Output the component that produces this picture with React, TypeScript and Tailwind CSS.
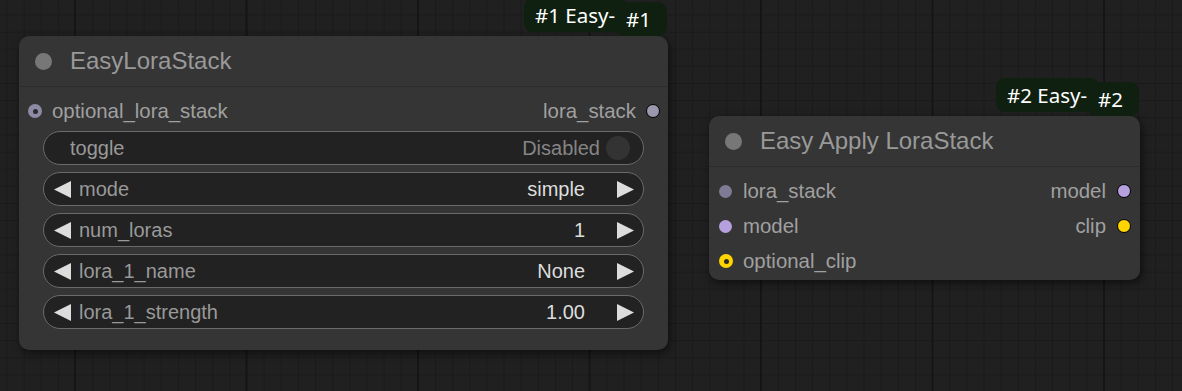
import React from "react";

type SlotKind = "ring" | "fill" | "out";

function Slot({ kind, color }: { kind: SlotKind; color: string }) {
  if (kind === "ring") {
    return (
      <span className={`flex h-[14px] w-[14px] shrink-0 items-center justify-center rounded-full ${color}`}>
        <span className="h-[5px] w-[5px] rounded-full bg-[#2a2a2a]" />
      </span>
    );
  }
  if (kind === "out") {
    return <span className={`h-[14px] w-[14px] shrink-0 rounded-full border-[1.5px] border-black ${color}`} />;
  }
  return <span className={`h-[13px] w-[13px] shrink-0 rounded-full ${color}`} />;
}

function Tri({ dir }: { dir: "l" | "r" }) {
  return (
    <svg width="17" height="17" viewBox="0 0 17 17" className="shrink-0">
      <polygon points={dir === "l" ? "17,0 17,17 0,8.5" : "0,0 0,17 17,8.5"} fill="#dddddd" />
    </svg>
  );
}

function Badge({ id }: { id: string }) {
  return (
    <div className="absolute right-[1px] top-[-38px] flex items-start font-['Noto_Sans','Open_Sans',sans-serif] text-[20.5px] text-white">
      <div className="flex h-[34px] items-center rounded-[9px] bg-[#0f1f10] pl-[11px] pr-[12px]">#{id} Easy-</div>
      <div className="-ml-[12px] mt-[4px] flex h-[34px] items-center rounded-[9px] bg-[#0f1f10] pl-[11px] pr-[16px]">#{id}</div>
    </div>
  );
}

function TitleBar({ title }: { title: string }) {
  return (
    <div className="flex h-[51px] items-center border-b border-[#2b2b2b] pl-[16px]">
      <span className="h-[17px] w-[17px] rounded-full bg-[#777777]" />
      <span className="ml-[18px] text-[24px] text-[#999999]">{title}</span>
    </div>
  );
}

function ComboWidget({ label, value }: { label: string; value: string }) {
  return (
    <div className="flex h-[34px] items-center rounded-full border border-[#6a6a6a] bg-[#222222] pl-[10px] pr-[9px] text-[20px]">
      <Tri dir="l" />
      <span className="ml-[8px] text-[#999999]">{label}</span>
      <span className="ml-auto text-[#dddddd]">{value}</span>
      <span className="ml-[32px] flex">
        <Tri dir="r" />
      </span>
    </div>
  );
}

export default function App() {
  return (
    <div className="relative h-[391px] w-[1182px] overflow-hidden bg-[#202020] bg-[linear-gradient(to_right,#151515_2px,transparent_2px),linear-gradient(to_right,#1a1a1a_1px,transparent_1px),linear-gradient(to_bottom,#1a1a1a_1px,transparent_1px)] bg-size-[171.5px_171.5px,17.15px_17.15px,17.15px_17.15px] bg-position-[74px_0px,6.5px_14.5px,6.5px_14.5px] font-['Liberation_Sans',Arial,sans-serif]">
      {/* node #1 */}
      <div className="absolute left-[19px] top-[36px] w-[649px] rounded-[10px] bg-[#353535] shadow-[2px_3px_8px_rgba(0,0,0,0.55)]">
        <Badge id="1" />
        <TitleBar title="EasyLoraStack" />
        <div className="pb-[21px] pt-[7px]">
          <div className="flex h-[35px] items-center text-[20.4px]">
            <div className="flex items-center gap-[10px] pl-[9px]">
              <Slot kind="ring" color="bg-[#8d8aa5]" />
              <span className="text-[#a0a0a0]">optional_lora_stack</span>
            </div>
            <div className="ml-auto flex items-center gap-[10px] pr-[8px]">
              <span className="text-[#a0a0a0]">lora_stack</span>
              <Slot kind="out" color="bg-[#9a98ac]" />
            </div>
          </div>
          <div className="mt-[2px] flex flex-col gap-[7px] px-[24px]">
            <div className="flex h-[34px] items-center rounded-full border border-[#6a6a6a] bg-[#222222] pl-[26px] pr-[13px] text-[20px]">
              <span className="text-[#999999]">toggle</span>
              <span className="ml-auto text-[#858585]">Disabled</span>
              <span className="ml-[6px] h-[24px] w-[24px] rounded-full bg-[#333333]" />
            </div>
            <ComboWidget label="mode" value="simple" />
            <ComboWidget label="num_loras" value="1" />
            <ComboWidget label="lora_1_name" value="None" />
            <ComboWidget label="lora_1_strength" value="1.00" />
          </div>
        </div>
      </div>

      {/* node #2 */}
      <div className="absolute left-[709px] top-[116px] w-[431px] rounded-[10px] bg-[#353535] shadow-[2px_3px_8px_rgba(0,0,0,0.55)]">
        <Badge id="2" />
        <TitleBar title="Easy Apply LoraStack" />
        <div className="pb-[1px] pt-[7px] text-[20.4px]">
          <div className="flex h-[35px] items-center">
            <div className="flex items-center gap-[11px] pl-[10px]">
              <Slot kind="fill" color="bg-[#7f7b95]" />
              <span className="text-[#a0a0a0]">lora_stack</span>
            </div>
            <div className="ml-auto flex items-center gap-[11px] pr-[9px]">
              <span className="text-[#a0a0a0]">model</span>
              <Slot kind="out" color="bg-[#b7a0de]" />
            </div>
          </div>
          <div className="flex h-[35px] items-center">
            <div className="flex items-center gap-[11px] pl-[10px]">
              <Slot kind="fill" color="bg-[#b7a0de]" />
              <span className="text-[#a0a0a0]">model</span>
            </div>
            <div className="ml-auto flex items-center gap-[11px] pr-[9px]">
              <span className="text-[#a0a0a0]">clip</span>
              <Slot kind="out" color="bg-[#ffd500]" />
            </div>
          </div>
          <div className="flex h-[35px] items-center">
            <div className="flex items-center gap-[10px] pl-[10px]">
              <Slot kind="ring" color="bg-[#ffd500]" />
              <span className="text-[#a0a0a0]">optional_clip</span>
            </div>
          </div>
        </div>
      </div>
    </div>
  );
}
